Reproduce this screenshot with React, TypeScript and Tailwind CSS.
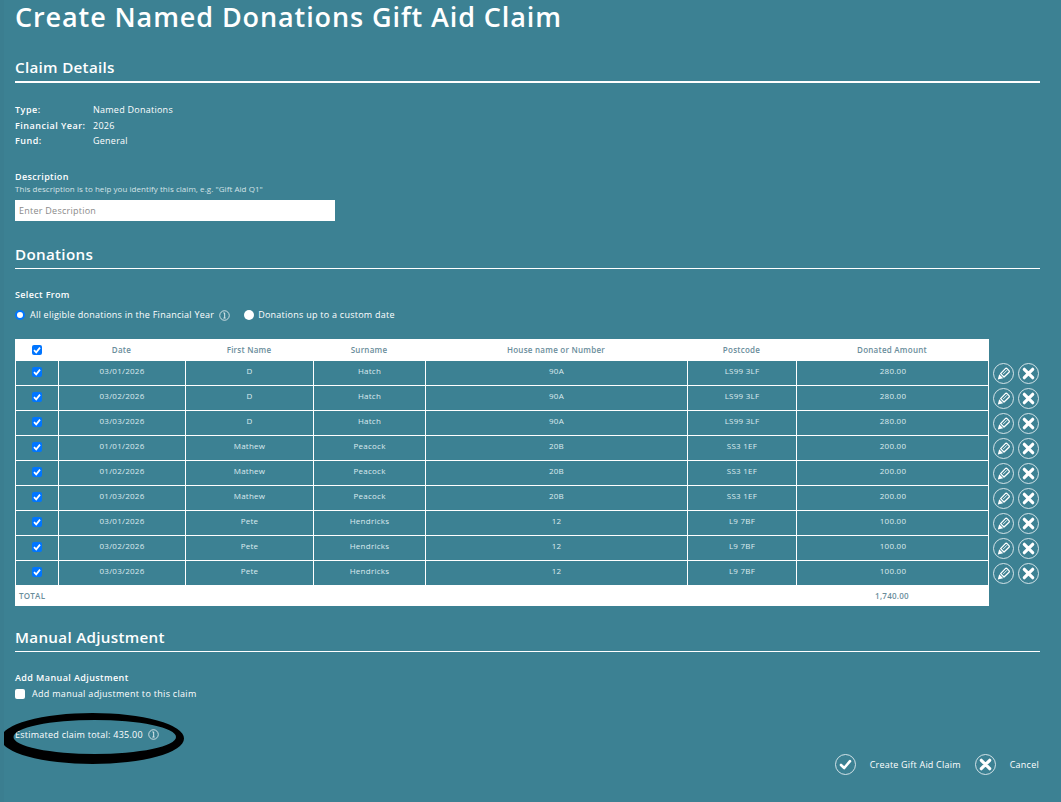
import React from "react";

const rows = [
  ["03/01/2026", "D", "Hatch", "90A", "LS99 3LF", "280.00"],
  ["03/02/2026", "D", "Hatch", "90A", "LS99 3LF", "280.00"],
  ["03/03/2026", "D", "Hatch", "90A", "LS99 3LF", "280.00"],
  ["01/01/2026", "Mathew", "Peacock", "20B", "SS3 1EF", "200.00"],
  ["01/02/2026", "Mathew", "Peacock", "20B", "SS3 1EF", "200.00"],
  ["01/03/2026", "Mathew", "Peacock", "20B", "SS3 1EF", "200.00"],
  ["03/01/2026", "Pete", "Hendricks", "12", "L9 7BF", "100.00"],
  ["03/02/2026", "Pete", "Hendricks", "12", "L9 7BF", "100.00"],
  ["03/03/2026", "Pete", "Hendricks", "12", "L9 7BF", "100.00"],
];

function Tick() {
  return (
    <span className="flex h-[10px] w-[10px] items-center justify-center rounded-[2px] bg-[#0075ff]">
      <svg viewBox="0 0 10 10" className="h-[10px] w-[10px]">
        <path d="M2 5.2 4.2 7.4 8 2.6" fill="none" stroke="#fff" strokeWidth="1.7" />
      </svg>
    </span>
  );
}

function Info() {
  return (
    <svg viewBox="0 0 12 12" className="h-[11px] w-[11px]">
      <circle cx="6" cy="6" r="5.2" fill="none" stroke="#fff" strokeWidth="0.8" />
      <path d="M4.8 3.2H6.2V8.6M4.8 8.8H7.2" fill="none" stroke="#fff" strokeWidth="0.9" />
    </svg>
  );
}

function Edit() {
  return (
    <svg viewBox="0 0 21 21" width={21} height={21}>
      <circle cx="10.5" cy="10.5" r="10" fill="none" stroke="#e3edf0" strokeWidth="0.9" />
      <path d="M7.6 10.6 12.4 5.6Q13.2 4.9 14 5.6L16 7.6Q16.7 8.4 16 9.2L11 14Z" fill="none" stroke="#fff" strokeWidth="1.3" strokeLinejoin="round" />
      <path d="M10.2 11 14 7.2" fill="none" stroke="#fff" strokeWidth="0.9" />
      <path d="M4.8 16.4 6.2 11.2 10.2 15.2Z" fill="#fff" />
    </svg>
  );
}

function Cross() {
  return (
    <svg viewBox="0 0 21 21" width={21} height={21}>
      <circle cx="10.5" cy="10.5" r="10" fill="none" stroke="#e3edf0" strokeWidth="0.9" />
      <path d="M6.3 6.3 14.7 14.7M14.7 6.3 6.3 14.7" fill="none" stroke="#fff" strokeWidth="3.2" strokeLinecap="round" />
    </svg>
  );
}

function Check() {
  return (
    <svg viewBox="0 0 21 21" width={21} height={21}>
      <circle cx="10.5" cy="10.5" r="10" fill="none" stroke="#e3edf0" strokeWidth="0.9" />
      <path d="M6 11 9.2 14 15 7.2" fill="none" stroke="#fff" strokeWidth="2.6" strokeLinecap="round" strokeLinejoin="round" />
    </svg>
  );
}

const cols = "grid grid-cols-[43px_127px_128px_112px_262px_109px_192px]";

function Heading({ children, rule }: { children: React.ReactNode; rule: string }) {
  return (
    <div className={`flex h-[30px] items-center text-[15.2px] font-semibold tracking-[0.3px] text-white ${rule}`}>
      {children}
    </div>
  );
}

export default function App() {
  return (
    <div className="min-h-[802px] bg-[#3b7e90] pl-1 font-['Open_Sans',sans-serif] text-[9px] tracking-[0.25px] text-white">
      <div className="relative h-[802px] overflow-hidden bg-[#3c8193] pl-[11px] pr-[21px]">
        <h1 className="h-[40px] text-[27px] font-semibold leading-[34px] tracking-[0.9px]">
          Create Named Donations Gift Aid Claim
        </h1>

        <div className="mt-[13px]">
          <Heading rule="border-b-2 border-white pt-[1px]">Claim Details</Heading>
        </div>

        <div className="mt-[19px] grid grid-cols-[78px_1fr] text-[9px] leading-[15.5px]">
          <b className="font-semibold tracking-[0.5px]">Type:</b>
          <span>Named Donations</span>
          <b className="font-semibold tracking-[0.5px]">Financial Year:</b>
          <span>2026</span>
          <b className="font-semibold tracking-[0.5px]">Fund:</b>
          <span>General</span>
        </div>

        <div className="mt-[21px] text-[9px] font-semibold leading-[13px] tracking-[0.35px]">Description</div>
        <div className="text-[8px] leading-[11px] tracking-[0.05px] text-[#d5e3e7]">
          This description is to help you identify this claim, e.g. "Gift Aid Q1"
        </div>
        <div className="mt-[6px] flex h-[21px] w-[320px] items-center bg-white px-1 pt-[1px] text-[9px] text-[#8a8a8a]">
          Enter Description
        </div>

        <div className="mt-[18px]">
          <Heading rule="border-b border-white pt-[3px]">Donations</Heading>
        </div>

        <div className="mt-[19px] text-[9px] font-semibold leading-[13px] tracking-[0.35px]">Select From</div>
        <div className="mt-[8px] flex h-[13px] items-center text-[9px]">
          <span className="h-[10px] w-[10px] rounded-full border-2 border-[#0075ff] bg-white" />
          <span className="ml-[5px]">All eligible donations in the Financial Year</span>
          <span className="ml-[5px]"><Info /></span>
          <span className="ml-[14px] h-[10px] w-[10px] rounded-full bg-white" />
          <span className="ml-[4px]">Donations up to a custom date</span>
        </div>

        <div className="relative mt-[17px] w-[974px]">
          <div className={`${cols} h-[22px] items-center bg-white text-center text-[8px] font-semibold text-[#6a8d9b]`}>
            <span className="flex justify-center"><Tick /></span>
            <span className="pt-[1px]">Date</span>
            <span className="pt-[1px]">First Name</span>
            <span className="pt-[1px]">Surname</span>
            <span className="pt-[1px]">House name or Number</span>
            <span className="pt-[1px]">Postcode</span>
            <span className="pt-[1px]">Donated Amount</span>
          </div>
          {rows.map((r, i) => (
            <div key={i} className="relative">
              <div className={`${cols} h-[25px] border-x border-b border-white text-center text-[8px] text-[#dcebef]`}>
                <span className="flex items-center justify-center border-r border-white pb-[2px]"><Tick /></span>
                {r.map((c, j) => (
                  <span key={j} className={`pt-[4px] leading-[11px] ${j < 5 ? "border-r border-white" : ""}`}>
                    {c}
                  </span>
                ))}
              </div>
              <div className="absolute left-[978px] top-[2px] flex gap-[4px]">
                <Edit />
                <Cross />
              </div>
            </div>
          ))}
          <div className={`${cols} h-[20px] items-center bg-white text-[8px] text-[#6a8d9b]`}>
            <span className="col-span-6 pl-1 font-semibold">TOTAL</span>
            <span className="text-center font-semibold">1,740.00</span>
          </div>
        </div>

        <div className="mt-[16px]">
          <Heading rule="border-b border-white pt-[3px]">Manual Adjustment</Heading>
        </div>

        <div className="mt-[19px] text-[9px] font-semibold leading-[13px] tracking-[0.4px]">Add Manual Adjustment</div>
        <div className="mt-[3px] flex h-[14px] items-center text-[9px]">
          <span className="h-[10px] w-[10px] rounded-[2px] bg-white" />
          <span className="ml-[7px] tracking-[0.3px]">Add manual adjustment to this claim</span>
        </div>

        <div className="mt-[27px] flex h-[14px] items-center text-[9px]">
          <span>Estimated claim total: 435.00</span>
          <span className="ml-[5px]"><Info /></span>
        </div>

        <svg viewBox="0 0 186 54" className="absolute left-[-4px] top-[712px] h-[54px] w-[186px]">
          <path
            fillRule="evenodd"
            d="M1 26.5a91.5 25.5 0 1 0 183 0a91.5 25.5 0 1 0 -183 0ZM13.5 25a81.25 17 0 1 0 162.5 0a81.25 17 0 1 0 -162.5 0Z"
            fill="#000"
          />
        </svg>

        <div className="absolute right-[22px] top-[754px] flex items-center text-[9px]">
          <Check />
          <span className="ml-[14px] tracking-[0.2px]">Create Gift Aid Claim</span>
          <span className="ml-[14px]"><Cross /></span>
          <span className="ml-[14px]">Cancel</span>
        </div>
      </div>
    </div>
  );
}
